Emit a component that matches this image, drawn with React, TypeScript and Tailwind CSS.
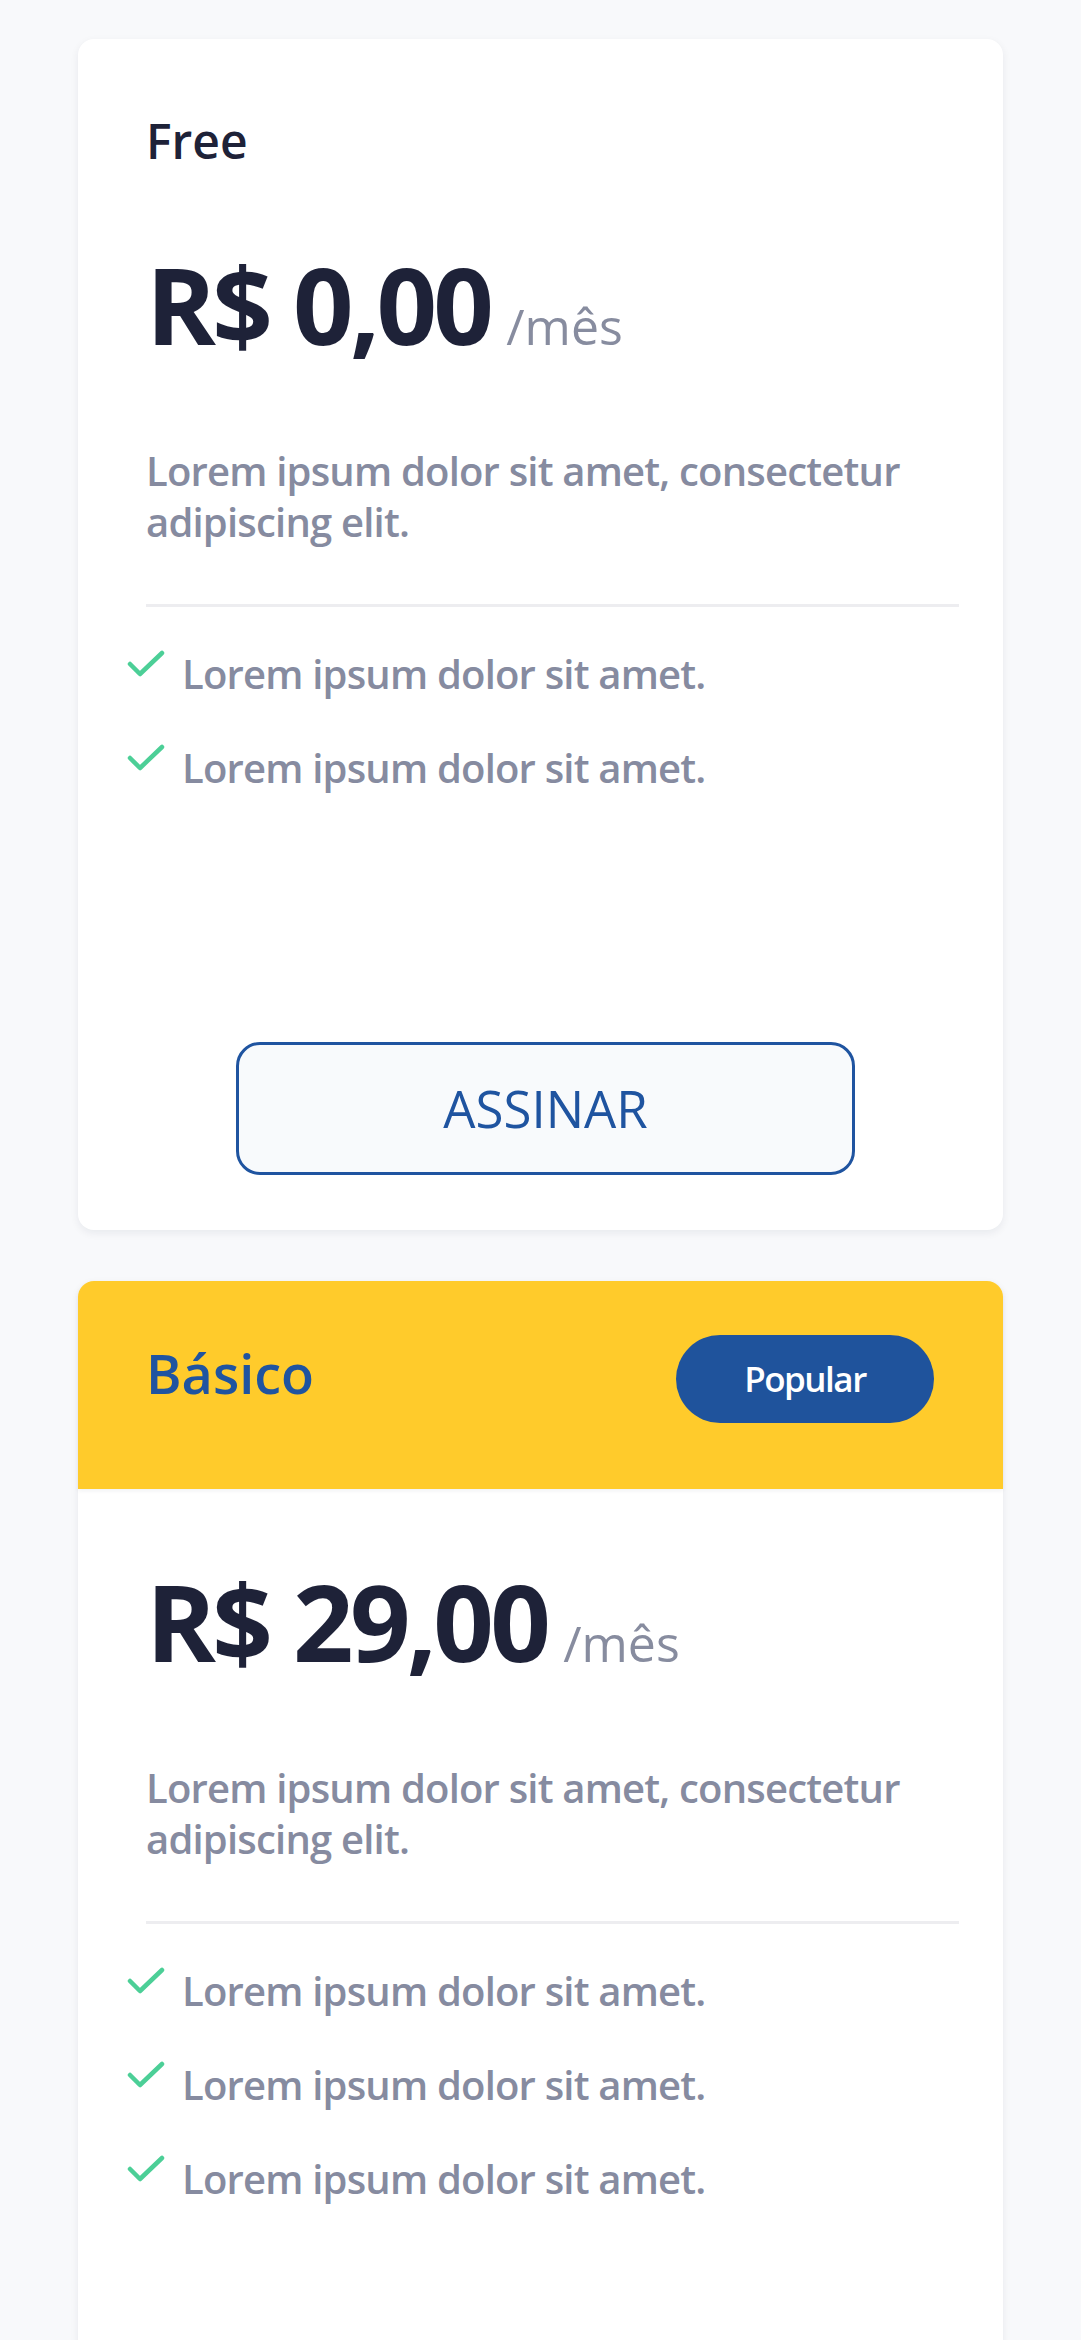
import React from 'react';

const CheckIcon = () => (
    <svg viewBox="0 0 38 28" className="w-[38px] h-[28px] mt-[2px] shrink-0" fill="none">
        <polyline points="3,14 13,24 35,3" stroke="#4ccf97" strokeWidth="4.5" strokeLinecap="round" strokeLinejoin="round" />
    </svg>
);

type Plan = {
    name: string;
    price: string;
    features: string[];
    popular?: boolean;
};

const plans: Plan[] = [
    { name: "Free", price: "R$ 0,00", features: ["Lorem ipsum dolor sit amet.", "Lorem ipsum dolor sit amet."] },
    {
        name: "Básico",
        price: "R$ 29,00",
        popular: true,
        features: ["Lorem ipsum dolor sit amet.", "Lorem ipsum dolor sit amet.", "Lorem ipsum dolor sit amet."],
    },
];

const PlanBody = ({ plan }: { plan: Plan }) => (
    <>
        {/* Price */}
        <div className="flex items-baseline">
            <span className="text-[106px] leading-none font-bold tracking-[-3.7px] text-[#1e2238]">{plan.price}</span>
            <span className="ml-[16px] text-[50px] leading-none text-[#878c9f]">/mês</span>
        </div>

        <p className="mt-[88px] text-[40px] leading-[51px] font-semibold tracking-[-0.8px] text-[#868ba0]">
            Lorem ipsum dolor sit amet, consectetur adipiscing elit.
        </p>

        <div className="mt-[57px] h-[3px] bg-[#ededf0]" />

        {/* Features */}
        <ul className="mt-[41px] -ml-[19px] flex flex-col gap-[43px]">
            {plan.features.map((feature, index) => (
                <li key={index} className="flex items-start gap-[17px]">
                    <CheckIcon />
                    <span className="text-[40px] leading-[51px] font-semibold tracking-[-0.8px] text-[#868ba0]">{feature}</span>
                </li>
            ))}
        </ul>
    </>
);

export default function App() {
    const [free, basic] = plans;

    return (
        <div className="min-h-screen bg-[#f8f9fb] pt-[39px] pb-[60px] font-['Open_Sans',sans-serif]">
            <div className="mx-[78px] flex flex-col gap-[51px]">

                {/* FREE PLAN */}
                <div className="bg-white rounded-[16px] shadow-[0_3px_8px_rgba(20,30,60,0.07)] pt-[78px] pb-[55px] pl-[68px] pr-[44px]">
                    <h3 className="text-[48px] leading-none font-semibold text-[#1e2238] mb-[86px]">{free.name}</h3>
                    <PlanBody plan={free} />
                    <button className="mt-[249px] ml-[90px] w-[619px] h-[133px] flex items-center justify-center border-[3px] border-[#1f54a0] rounded-[24px] bg-[#f8fafc] text-[51px] text-[#1f54a0]">
                        ASSINAR
                    </button>
                </div>

                {/* BASIC PLAN */}
                <div className="bg-white rounded-[16px] shadow-[0_3px_8px_rgba(20,30,60,0.07)] pb-[300px]">
                    <div className="h-[208px] flex items-start justify-between bg-[#ffcb2b] rounded-t-[16px] pt-[54px] pl-[68px] pr-[69px] shadow-[0_2px_4px_rgba(20,30,60,0.06)]">
                        <h3 className="mt-[11px] text-[54px] leading-none font-semibold text-[#1f54a0]">{basic.name}</h3>
                        <span className="w-[258px] h-[88px] rounded-full bg-[#1f539c] flex items-center justify-center text-[35px] font-semibold tracking-[-1.5px] text-white">
                            Popular
                        </span>
                    </div>
                    <div className="pt-[79px] pl-[68px] pr-[44px]">
                        <PlanBody plan={basic} />
                    </div>
                </div>

            </div>
        </div>
    );
}
